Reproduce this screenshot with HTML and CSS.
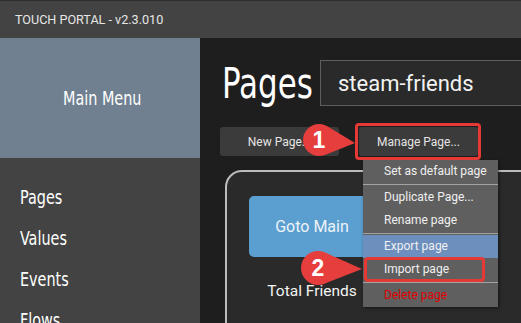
FILE: index.html
```html
<!DOCTYPE html>
<html>
<head>
<meta charset="utf-8">
<link rel="stylesheet" href="styles.css">
</head>
<body>
<div class="app">
  <div class="titlebar">TOUCH PORTAL - v2.3.010</div>
  <div class="content">
    <div class="sidebar">
      <div class="mainmenu"><span class="cond">Main Menu</span></div>
      <div class="nav">
        <div class="nav-item"><span class="cond">Pages</span></div>
        <div class="nav-item"><span class="cond">Values</span></div>
        <div class="nav-item"><span class="cond">Events</span></div>
        <div class="nav-item"><span class="cond">Flows</span></div>
      </div>
    </div>
    <div class="main">
      <div class="header">
        <div class="page-title"><span class="cond">Pages</span></div>
        <div class="page-select">steam-friends</div>
      </div>
      <div class="toolbar">
        <div class="btn">New Page...</div>
        <div class="btn">Manage Page...</div>
      </div>
      <div class="card">
        <div class="tile">
          <div class="goto">Goto Main</div>
          <div class="tile-label">Total Friends</div>
        </div>
      </div>
    </div>
  </div>

  <div class="menu">
    <div class="menu-item">Set as default page</div>
    <div class="menu-sep"></div>
    <div class="menu-item">Duplicate Page...</div>
    <div class="menu-item">Rename page</div>
    <div class="menu-sep"></div>
    <div class="menu-item active">Export page</div>
    <div class="menu-item">Import page</div>
    <div class="menu-sep"></div>
    <div class="menu-item danger">Delete page</div>
  </div>

  <div class="outline outline-manage"></div>
  <div class="outline outline-import"></div>

  <svg class="marker marker-1" width="58" height="38" viewBox="0 0 58 38">
    <polygon points="27.3,4.3 55,21 24.9,32.9" fill="#e63d3d"/>
    <circle cx="19" cy="18" r="16" fill="#e63d3d"/>
    <text x="19" y="26" text-anchor="middle" class="marker-num">1</text>
  </svg>
  <svg class="marker marker-2" width="66" height="38" viewBox="0 0 66 38">
    <polygon points="25.9,3.5 63,20 25.2,34.8" fill="#e63d3d"/>
    <circle cx="19" cy="19" r="17" fill="#e63d3d"/>
    <text x="19" y="27" text-anchor="middle" class="marker-num">2</text>
  </svg>
</div>
</body>
</html>
```

FILE: styles.css
```css
* { box-sizing: border-box; }

html, body {
  margin: 0;
  padding: 0;
}

body {
  width: 521px;
  height: 323px;
  overflow: hidden;
  background: #1e1e1e;
  font-family: Roboto, "Liberation Sans", sans-serif;
}

.app {
  position: relative;
  width: 521px;
  height: 323px;
  display: flex;
  flex-direction: column;
  overflow: hidden;
}

.cond {
  display: inline-block;
  font-family: "Liberation Sans Narrow", "DejaVu Sans Condensed", "Liberation Sans", sans-serif;
  font-stretch: condensed;
  transform: scaleX(0.8);
  transform-origin: left center;
  white-space: nowrap;
}

.titlebar {
  height: 38px;
  flex: none;
  border-top: 1px solid #2e2e2e;
  background: #434343;
  color: #e6e6e6;
  font-size: 12.6px;
  padding-left: 15px;
  display: flex;
  align-items: center;
}

.content {
  flex: 1;
  display: flex;
  min-height: 0;
}

.sidebar {
  width: 200px;
  flex: none;
  background: #434343;
  display: flex;
  flex-direction: column;
  overflow: hidden;
}

.mainmenu {
  flex: none;
  height: 120px;
  background: #708090;
  color: #fff;
  font-size: 20px;
  display: flex;
  align-items: center;
  padding-left: 63px;
}

.nav {
  flex: none;
  padding: 19px 0 0 20px;
  display: flex;
  flex-direction: column;
}

.nav-item {
  flex: none;
  height: 41px;
  line-height: 41px;
  font-size: 20px;
  color: #fff;
}

.main {
  flex: 1;
  min-width: 0;
  padding-left: 20px;
  display: flex;
  flex-direction: column;
}

.header {
  flex: none;
  margin-top: 22px;
  height: 46px;
  display: flex;
  align-items: center;
}

.page-title {
  width: 100px;
  padding-left: 2px;
  color: #fff;
  font-size: 43px;
  line-height: 46px;
}

.page-select {
  flex: 1;
  height: 46px;
  margin-right: -30px;
  background: #2a2a2a;
  border: 1px solid #5e5e5e;
  color: #f2f2f2;
  font-size: 22px;
  padding-left: 17px;
  display: flex;
  align-items: center;
}

.toolbar {
  flex: none;
  margin-top: 21px;
  display: flex;
  gap: 20px;
}

.btn {
  width: 119px;
  height: 29px;
  background: #3b3b3b;
  border-radius: 3px;
  color: #e4e4e4;
  font-size: 12px;
  display: flex;
  align-items: center;
  justify-content: center;
}

.card {
  flex: 1;
  margin-top: 14px;
  margin-left: 5px;
  margin-right: -30px;
  margin-bottom: -30px;
  background: #2a2a2a;
  border: 2px solid #bcbcbc;
  border-radius: 17px 0 0 0;
  padding: 24px 0 0 22px;
}

.tile {
  width: 126px;
  display: flex;
  flex-direction: column;
  align-items: center;
}

.goto {
  width: 126px;
  height: 61px;
  background: #5a9fd0;
  border-radius: 5px;
  color: #eef3f8;
  font-size: 16px;
  display: flex;
  align-items: center;
  justify-content: center;
}

.tile-label {
  margin-top: 25px;
  color: #f4f4f4;
  font-size: 15.5px;
}

.menu {
  position: absolute;
  left: 363px;
  top: 160px;
  width: 135px;
  background: #5f5f5f;
  box-shadow: 1px 1px 3px rgba(0, 0, 0, 0.5);
}

.menu-item {
  height: 23px;
  line-height: 23px;
  padding-left: 21px;
  color: #f0f0f0;
  font-size: 12px;
  white-space: nowrap;
}

.menu-item.active {
  background: #6d8fbd;
}

.menu-item.danger {
  color: #e00000;
}

.menu-sep {
  height: 1px;
  margin: 1px 0;
  background: #a3a3a3;
}

.outline {
  position: absolute;
  border: 3px solid #e53935;
  border-radius: 4px;
}

.outline-manage {
  left: 355px;
  top: 123px;
  width: 126px;
  height: 37px;
}

.outline-import {
  left: 364px;
  top: 257px;
  width: 121px;
  height: 25px;
}

.marker {
  position: absolute;
  overflow: visible;
}

.marker-1 {
  left: 300px;
  top: 122px;
}

.marker-2 {
  left: 299px;
  top: 249px;
}

.marker-num {
  fill: #fff;
  font-family: "Liberation Sans", Roboto, sans-serif;
  font-weight: bold;
  font-size: 23px;
}
```
